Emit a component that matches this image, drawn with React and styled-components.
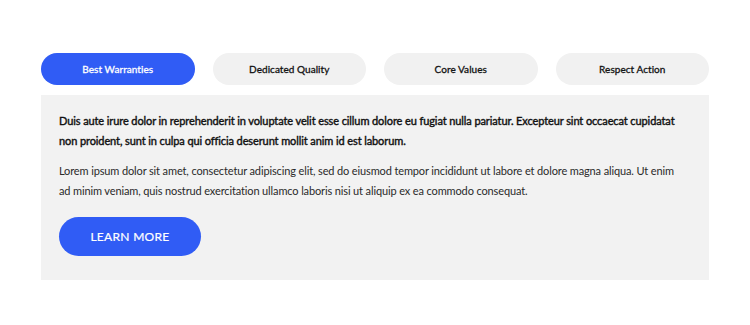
import React, { useState } from "react";
import styled, { createGlobalStyle } from "styled-components";

const Global = createGlobalStyle`
  html, body { margin: 0; padding: 0; background: #ffffff; }
  body { font-family: Lato, "Open Sans", sans-serif; }
`;

const Section = styled.section`
  padding: 53px 41px 45px 41px;
  box-sizing: border-box;
  width: 750px;
`;

const TabList = styled.div`
  display: grid;
  grid-template-columns: repeat(4, 1fr);
  column-gap: 18px;
`;

const Tab = styled.button`
  height: 32px;
  border: none;
  border-radius: 16px;
  background: ${(p) => (p.$active ? "#305cf5" : "#f1f1f1")};
  color: ${(p) => (p.$active ? "#ffffff" : "#111111")};
  font-family: Lato, "Open Sans", sans-serif;
  font-size: 10px;
  font-weight: 400;
  -webkit-text-stroke: 0.3px currentColor;
  letter-spacing: 0.05px;
  cursor: pointer;
  padding: 0;
`;

const Panel = styled.div`
  margin-top: 10px;
  background: #f2f2f2;
  padding: 16px 24px 24px 18px;
`;

const Lead = styled.p`
  margin: 0;
  font-size: 11px;
  line-height: 19.5px;
  font-weight: 400;
  letter-spacing: -0.1px;
  -webkit-text-stroke: 0.4px currentColor;
  color: #111111;
`;

const Body = styled.p`
  margin: 11px 0 0 0;
  font-size: 11px;
  line-height: 19.5px;
  letter-spacing: -0.13px;
  color: #2a2a2a;
`;

const Cta = styled.a`
  display: inline-flex;
  align-items: center;
  justify-content: center;
  margin-top: 17px;
  width: 142px;
  height: 39px;
  border-radius: 20px;
  background: #305cf5;
  color: #ffffff;
  font-size: 12px;
  letter-spacing: 0.3px;
  -webkit-text-stroke: 0.2px currentColor;
  text-decoration: none;
`;

const tabs = ["Best Warranties", "Dedicated Quality", "Core Values", "Respect Action"];

export default function App() {
  const [active, setActive] = useState(0);
  return (
    <>
      <Global />
      <Section>
        <TabList>
          {tabs.map((t, i) => (
            <Tab key={t} $active={i === active} onClick={() => setActive(i)}>
              {t}
            </Tab>
          ))}
        </TabList>
        <Panel>
          <Lead>
            Duis aute irure dolor in reprehenderit in voluptate velit esse cillum dolore eu fugiat nulla pariatur. Excepteur sint occaecat cupidatat non proident, sunt in culpa qui officia deserunt mollit anim id est laborum.
          </Lead>
          <Body>
            Lorem ipsum dolor sit amet, consectetur adipiscing elit, sed do eiusmod tempor incididunt ut labore et dolore magna aliqua. Ut enim ad minim veniam, quis nostrud exercitation ullamco laboris nisi ut aliquip ex ea commodo consequat.
          </Body>
          <Cta href="#">LEARN MORE</Cta>
        </Panel>
      </Section>
    </>
  );
}
